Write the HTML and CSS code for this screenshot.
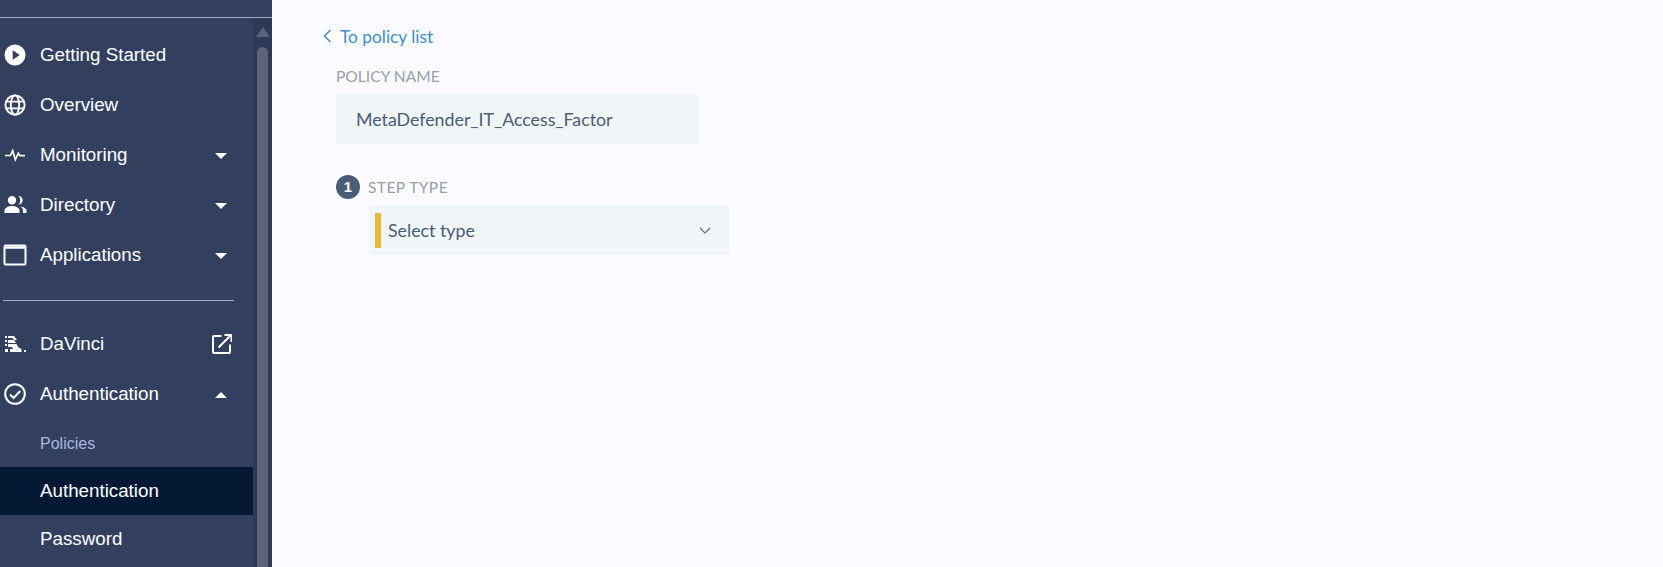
FILE: index.html
```html
<!DOCTYPE html>
<html lang="en">
<head>
<meta charset="utf-8">
<title>Authentication policy</title>
<link rel="stylesheet" href="styles.css">
</head>
<body>
<div class="app">
  <aside class="sidebar">
    <div class="sidebar-top"></div>
    <div class="sidebar-body">
      <nav class="nav">
        <a class="nav-row">
          <svg class="icon" viewBox="0 0 24 24"><path fill="#fff" fill-rule="evenodd" d="M12 1.500a10.500 10.500 0 1 0 0 21 10.500 10.500 0 0 0 0-21zM9.700 16.800V7.200l7 4.800z"/></svg>
          <span class="nav-label">Getting Started</span>
        </a>
        <a class="nav-row">
          <svg class="icon" viewBox="0 0 24 24" fill="none" stroke="#fff" stroke-width="1.900"><circle cx="12" cy="12" r="9.600"/><ellipse cx="12" cy="12" rx="4.200" ry="9.600"/><path d="M3 8.600h18M3 15.400h18"/></svg>
          <span class="nav-label">Overview</span>
        </a>
        <a class="nav-row">
          <svg class="icon" viewBox="0 0 24 24" fill="none" stroke="#fff" stroke-width="1.700"><path d="M2 12.500h5.500l2.200-4.800 2.600 9 3-6.400 1.600 2.400h5"/></svg>
          <span class="nav-label">Monitoring</span>
          <span class="caret"></span>
        </a>
        <a class="nav-row">
          <svg class="icon" viewBox="0 0 24 24"><path fill="#fff" d="M9 11.500a4.200 4.200 0 1 0 0-8.400 4.200 4.200 0 0 0 0 8.400zM1.500 20v-2.800c0-2.700 5-4.200 7.500-4.200s7.500 1.500 7.500 4.200V20zM15.500 11.500a4.200 4.200 0 0 0 0-8.400 5.800 5.800 0 0 1 0 8.400zM17 13.500c2 1 3 2.400 3 3.900V20h3.500v-2.600c0-2.200-3.700-3.500-6.500-3.900z"/></svg>
          <span class="nav-label">Directory</span>
          <span class="caret"></span>
        </a>
        <a class="nav-row">
          <svg class="icon" viewBox="0 0 24 24" fill="none" stroke="#fff" stroke-width="2"><rect x="1.500" y="2.500" width="21" height="19" rx="1"/><path d="M1.500 4.500h21" stroke-width="2.500"/></svg>
          <span class="nav-label">Applications</span>
          <span class="caret"></span>
        </a>
        <div class="nav-divider"></div>
        <a class="nav-row">
          <svg class="icon" viewBox="0 0 24 24"><path fill="#fff" d="M2 4h2v2H2zM5 4h6l3 4h-3L9.500 6H5zM2 8h2v2H2zM5 8h6l2 3H5zM2 12h2v2H2zM5 12h8.500l2 3.500 3 1.500V20H7v-3h3l-1-2H5zM21 18h2v2h-2zM2 17h3v3H2z"/></svg>
          <span class="nav-label">DaVinci</span>
          <svg class="external" viewBox="0 0 20 20" fill="none" stroke="#fff" stroke-width="2"><path d="M9.500 2H2a1 1 0 0 0-1 1v15a1 1 0 0 0 1 1h15a1 1 0 0 0 1-1v-7.500"/><path d="M6.500 13.500L18.500 1.500M12.500 1h7v7"/></svg>
        </a>
        <a class="nav-row">
          <svg class="icon" viewBox="0 0 24 24" fill="none" stroke="#fff" stroke-width="2"><circle cx="12" cy="12" r="9.800"/><path d="M7 12.500l3.500 3.500 6.800-7"/></svg>
          <span class="nav-label">Authentication</span>
          <span class="caret caret-up"></span>
        </a>
        <a class="nav-sub nav-sub-muted">Policies</a>
        <a class="nav-sub nav-sub-active">Authentication</a>
        <a class="nav-sub">Password</a>
      </nav>
      <div class="scrollbar">
        <span class="scroll-arrow"></span>
        <span class="scroll-thumb"></span>
      </div>
    </div>
  </aside>
  <main class="main">
    <a class="back-link">
      <svg class="back-chevron" viewBox="0 0 9 14" fill="none" stroke="#3b8fca" stroke-width="1.500"><path d="M7.500 1L1.500 7l6 6"/></svg>
      <span>To policy list</span>
    </a>
    <section class="form">
      <div class="field-label">POLICY NAME</div>
      <div class="name-box">MetaDefender_IT_Access_Factor</div>
      <div class="step-head">
        <span class="step-badge">1</span>
        <span class="field-label step-label">STEP TYPE</span>
      </div>
      <div class="select-box">
        <span class="select-bar"></span>
        <span class="select-text">Select type</span>
        <svg class="select-chevron" viewBox="0 0 12 7" fill="none" stroke="#5a6b84" stroke-width="1.100"><path d="M1 1l5 5 5-5"/></svg>
      </div>
    </section>
  </main>
</div>
</body>
</html>
```
FILE: styles.css
```css
* { box-sizing: border-box; }
html, body { margin: 0; height: 100%; overflow: hidden; }
body { background: #fbfbff; }
a { display: block; }

.app { display: flex; height: 567px; }

.sidebar {
  width: 272px;
  flex: none;
  display: flex;
  flex-direction: column;
  background: #323f5f;
  color: #fff;
  font-family: "Liberation Sans", Arial, sans-serif;
  font-size: 18.75px;
  overflow: hidden;
}
.sidebar-top { height: 18px; flex: none; border-bottom: 1px solid #a3aebf; }
.sidebar-body { flex: 1; display: flex; min-height: 0; }

.nav { width: 253px; flex: none; padding-top: 12px; }
.nav-row {
  display: flex;
  align-items: center;
  height: 50px;
  padding: 0 19px 0 3px;
}
.icon { width: 24px; height: 24px; flex: none; margin: 0 13px 0 0; }
.nav-label { flex: 1; }
.caret {
  width: 0; height: 0; margin: 2px 7px 0 0;
  border-left: 6px solid transparent;
  border-right: 6px solid transparent;
  border-top: 6px solid #fff;
}
.caret-up { border-top: 0; border-bottom: 6px solid #fff; }
.external { width: 20px; height: 20px; flex: none; margin-right: 2px; }
.nav-divider { height: 1px; margin: 20px 19px 18px 3px; background: #a3aebf; }
.nav-sub { height: 48px; line-height: 48px; padding-left: 40px; }
.nav-sub-muted { color: #a9b8e0; font-size: 16px; line-height: 50px; }
.nav-sub-active { background: #051834; }

.scrollbar {
  width: 19px;
  flex: none;
  background: #2d3958;
  display: flex;
  flex-direction: column;
  align-items: center;
  padding-top: 9px;
}
.scroll-arrow {
  width: 0; height: 0;
  border-left: 7px solid transparent;
  border-right: 7px solid transparent;
  border-bottom: 10px solid #5b6479;
  margin-bottom: 10px;
}
.scroll-thumb {
  width: 11px;
  flex: 1;
  background: #5b6479;
  border-radius: 6px 6px 0 0;
  margin-bottom: -10px;
}

.main {
  flex: 1;
  padding: 24px 0 0 51px;
  font-family: Lato, "Noto Sans", sans-serif;
  color: #4a5d78;
}
.back-link {
  display: flex;
  align-items: center;
  height: 24px;
  color: #3b8fca;
  font-size: 17.3px;
}
.back-chevron { width: 9px; height: 14px; margin-right: 8px; }
.form { padding: 19px 0 0 13px; }
.field-label { color: #98a0aa; font-size: 15.6px; line-height: 18px; }
.step-label { letter-spacing: 0.4px; }
.name-box {
  width: 363px;
  height: 50px;
  margin-top: 9px;
  padding-left: 20px;
  line-height: 50px;
  font-size: 17.8px;
  background: #f0f5f7;
  border-radius: 2px;
}
.step-head { display: flex; align-items: center; gap: 8px; margin-top: 31px; }
.step-badge {
  width: 24px; height: 24px;
  border-radius: 50%;
  background: #4a5d78;
  color: #fff;
  font-family: "Liberation Sans", Arial, sans-serif;
  font-size: 15px;
  font-weight: 700;
  text-align: center;
  line-height: 24px;
}
.select-box {
  display: flex;
  align-items: center;
  width: 360px;
  height: 50px;
  margin: 6px 0 0 33px;
  padding: 0 18px 0 6px;
  background: #f0f5f7;
  border-radius: 2px;
}
.select-bar { width: 6px; height: 35px; background: #ecb838; flex: none; margin-right: 7px; }
.select-text { flex: 1; font-size: 17.8px; }
.select-chevron { width: 12px; height: 7px; }
```
